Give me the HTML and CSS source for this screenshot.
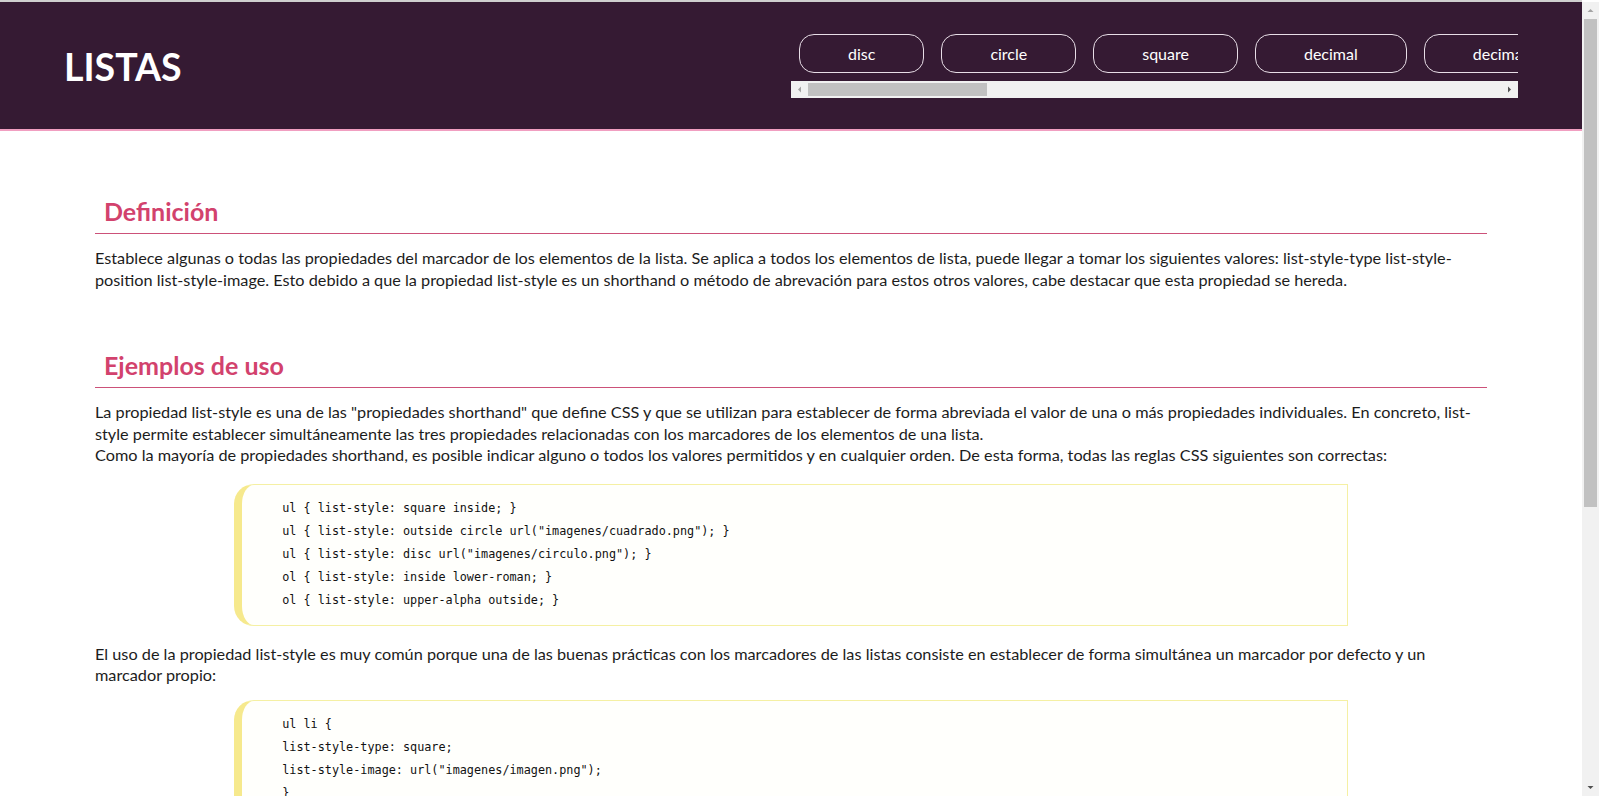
FILE: index.html
```html
<!DOCTYPE html>
<html lang="es">
<head>
<meta charset="utf-8">
<title>Listas</title>
<link rel="stylesheet" href="styles.css">
</head>
<body>
<header class="top">
  <h1 class="brand">LISTAS</h1>
  <nav class="tabs-wrap">
    <div class="tabs">
      <button class="tab">disc</button>
      <button class="tab">circle</button>
      <button class="tab">square</button>
      <button class="tab">decimal</button>
      <button class="tab">decimal-leading-zero</button>
      <button class="tab">lower-roman</button>
      <button class="tab">upper-roman</button>
      <button class="tab">lower-greek</button>
      <button class="tab">lower-latin</button>
      <button class="tab">upper-latin</button>
      <button class="tab">armenian</button>
      <button class="tab">georgian</button>
      <button class="tab">lower-alpha</button>
      <button class="tab">upper-alpha</button>
      <button class="tab">none</button>
    </div>
    <div class="hbar">
      <span class="hbar-btn"><svg width="17" height="17" viewBox="0 0 17 17"><path d="M10 5.5v6L7 8.5z" fill="#a3a3a3"/></svg></span>
      <span class="hbar-track"><span class="hbar-thumb"></span></span>
      <span class="hbar-btn"><svg width="17" height="17" viewBox="0 0 17 17"><path d="M7 5.5v6l3-3z" fill="#505050"/></svg></span>
    </div>
  </nav>
</header>
<main class="content">
  <section class="sec">
    <h2 class="sec-title">Definición</h2>
    <p class="text">Establece algunas o todas las propiedades del marcador de los elementos de la lista. Se aplica a todos los elementos de lista, puede llegar a tomar los siguientes valores: list-style-type list-style-position list-style-image. Esto debido a que la propiedad list-style es un shorthand o método de abrevación para estos otros valores, cabe destacar que esta propiedad se hereda.</p>
  </section>
  <section class="sec">
    <h2 class="sec-title">Ejemplos de uso</h2>
    <p class="text">La propiedad list-style es una de las "propiedades shorthand" que define CSS y que se utilizan para establecer de forma abreviada el valor de una o más propiedades individuales. En concreto, list-style permite establecer simultáneamente las tres propiedades relacionadas con los marcadores de los elementos de una lista.<br>Como la mayoría de propiedades shorthand, es posible indicar alguno o todos los valores permitidos y en cualquier orden. De esta forma, todas las reglas CSS siguientes son correctas:</p>
    <div class="code">
      <div class="code-line">ul { list-style: square inside; }</div>
      <div class="code-line">ul { list-style: outside circle url("imagenes/cuadrado.png"); }</div>
      <div class="code-line">ul { list-style: disc url("imagenes/circulo.png"); }</div>
      <div class="code-line">ol { list-style: inside lower-roman; }</div>
      <div class="code-line">ol { list-style: upper-alpha outside; }</div>
    </div>
    <p class="text text-snug">El uso de la propiedad list-style es muy común porque una de las buenas prácticas con los marcadores de las listas consiste en establecer de forma simultánea un marcador por defecto y un marcador propio:</p>
    <div class="code code-snug">
      <div class="code-line">ul li {</div>
      <div class="code-line">list-style-type: square;</div>
      <div class="code-line">list-style-image: url("imagenes/imagen.png");</div>
      <div class="code-line">}</div>
    </div>
    <p class="text">Los navegadores muestran normalmente la imagen indicada mediante list-style-image. Si la imagen no se puede cargar, o el navegador no puede mostrarla, se muestra el marcador cuadrado indicado mediante list-style-type.</p>
  </section>
</main>
<div class="vbar" aria-hidden="true">
  <span class="vbar-btn"><svg width="17" height="17" viewBox="0 0 17 17"><path d="M5.5 10h6l-3-3z" fill="#a3a3a3"/></svg></span>
  <span class="vbar-track"><span class="vbar-thumb"></span></span>
  <span class="vbar-btn"><svg width="17" height="17" viewBox="0 0 17 17"><path d="M5.5 7h6l-3 3z" fill="#505050"/></svg></span>
</div>
</body>
</html>
```
FILE: styles.css
```css
* { box-sizing: border-box; }

html { background: #ffffff; }

body {
  margin: 0 17px 0 0;
  border-top: 2px solid #cfcfcf;
  font-family: Lato, "Open Sans", sans-serif;
  color: #1c1c1c;
}

/* header */
.top {
  display: flex;
  justify-content: space-between;
  align-items: flex-start;
  height: 129px;
  padding: 24px 64px 0 64px;
  background: #351a33;
  border-bottom: 2px solid #f19fc1;
}

.brand {
  margin: 18px 0 0;
  font: 700 37.5px/1.2 Lato, sans-serif;
  color: #ffffff;
}

.tabs-wrap {
  width: 50%;
  display: flex;
  flex-direction: column;
}

.tabs {
  display: flex;
  gap: 17px;
  padding: 8px;
  overflow: hidden;
}

.tab {
  flex: none;
  height: 39px;
  padding: 0 48px;
  border: 1px solid #e7dde6;
  border-radius: 15px;
  background: transparent;
  color: #ffffff;
  font: 16px Lato, sans-serif;
  white-space: nowrap;
}

.hbar {
  display: flex;
  height: 17px;
  background: #f1f1f1;
}

.hbar-btn {
  flex: none;
  width: 17px;
  height: 17px;
  display: block;
}

.hbar-btn svg { display: block; }

.hbar-track {
  flex: 1;
  padding: 2px 0;
}

.hbar-thumb {
  display: block;
  width: 179px;
  height: 13px;
  background: #c1c1c1;
}

/* page scrollbar */
.vbar {
  position: fixed;
  top: 2px;
  right: 0;
  bottom: 0;
  width: 17px;
  display: flex;
  flex-direction: column;
  background: #f1f1f1;
}

.vbar-btn {
  flex: none;
  display: block;
  width: 17px;
  height: 17px;
}

.vbar-btn svg { display: block; }

.vbar-track {
  flex: 1;
  padding: 0 2px;
}

.vbar-thumb {
  display: block;
  height: 488px;
  background: #c1c1c1;
}

/* content */
.content {
  padding: 5px 95px 60px;
}

.sec-title {
  margin: 60px 0 0;
  padding: 0 0 7px 9px;
  font: 700 25px/1.2 Lato, sans-serif;
  color: #d2426d;
  border-bottom: 1px solid #cc5179;
}

.text {
  margin: 13px 0 16px;
  font-size: 16.25px;
  line-height: 21.5px;
}

.text-snug { margin-bottom: 14px; }

.code {
  width: 80%;
  margin: 18px auto 17px;
  padding: 12.5px 40px;
  background: #fffffc;
  border: 1px solid #f5f0a3;
  border-left: 8px solid #f6e98d;
  border-radius: 20px 0 0 20px;
  font: 11.8px/23px "DejaVu Sans Mono", "Liberation Mono", monospace;
  color: #111111;
}

.code-snug { margin-top: 14px; }

.code-line { white-space: pre; }
```
